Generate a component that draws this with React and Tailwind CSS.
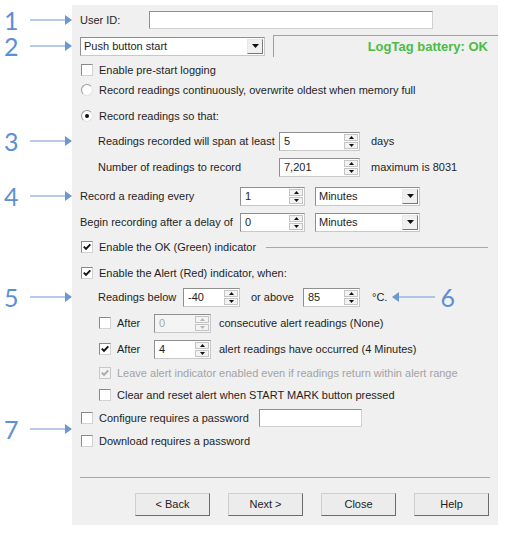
import React from "react"

const Callout = ({ n }) => (
    <div className="absolute right-full top-1/2 flex w-[72px] -translate-y-1/2 items-center">
        <span className="w-[31px] pl-[4px] text-[25px] font-normal leading-[20px] text-[#5b8fd6] font-['Lato',sans-serif]">{n}</span>
        <svg width="42" height="10" viewBox="0 0 42 10" className="shrink-0">
            <line x1="0" y1="5" x2="36" y2="5" stroke="#6d97d3" strokeWidth="1.2" />
            <polygon points="35,0 42,5 35,10" fill="#6d97d3" />
        </svg>
    </div>
)

const Check = ({ checked, disabled }) => (
    <span
        className={
            disabled
                ? "inline-flex h-[12px] w-[12px] shrink-0 items-center justify-center border border-[#c8c8c8] bg-[#f4f4f4]"
                : "inline-flex h-[12px] w-[12px] shrink-0 items-center justify-center border border-t-[#8a8a8a] border-l-[#8a8a8a] border-r-[#d2d2d2] border-b-[#d2d2d2] bg-white"
        }
    >
        {checked && (
            <svg width="8" height="8" viewBox="0 0 8 8">
                <path d="M0.8 3.6 L3 5.9 L7.3 1.3" stroke={disabled ? "#a9a9a9" : "#111"} strokeWidth="1.9" fill="none" />
            </svg>
        )}
    </span>
)

const Radio = ({ selected }) => (
    <span className="inline-flex h-[12px] w-[12px] shrink-0 items-center justify-center rounded-full border border-t-[#9a9a9a] border-l-[#9a9a9a] border-r-[#e2e2e2] border-b-[#e2e2e2] bg-white">
        {selected && <span className="h-[4px] w-[4px] rounded-full bg-[#111]" />}
    </span>
)

const Arrow = ({ up, disabled }) => (
    <svg width="5" height="3" viewBox="0 0 5 3">
        <polygon points={up ? "0,3 2.5,0 5,3" : "0,0 2.5,3 5,0"} fill={disabled ? "#b5b5b5" : "#111"} />
    </svg>
)

const Spin = ({ value, w, disabled }) => (
    <div className={`flex h-[19px] shrink-0 border border-t-[#8f8f8f] border-l-[#8f8f8f] border-r-[#c8c8c8] border-b-[#c8c8c8] ${disabled ? "bg-[#f4f4f4] text-[#a8a8a8]" : "bg-white"} ${w}`}>
        <span className="flex-1 pl-[4px] leading-[17px]">{value}</span>
        <div className="flex w-[15px] flex-col gap-px py-px pr-px">
            <span className="flex flex-1 items-center justify-center border border-[#c4c4c4] bg-[#f3f3f3]">
                <Arrow up disabled={disabled} />
            </span>
            <span className="flex flex-1 items-center justify-center border border-[#c4c4c4] bg-[#f3f3f3]">
                <Arrow disabled={disabled} />
            </span>
        </div>
    </div>
)

const Select = ({ value, w }) => (
    <div className={`flex h-[19px] shrink-0 items-center border border-t-[#8f8f8f] border-l-[#8f8f8f] border-r-[#c8c8c8] border-b-[#c8c8c8] bg-white ${w}`}>
        <span className="flex-1 pl-[3px]">{value}</span>
        <span className="mr-px flex h-[15px] w-[16px] items-center justify-center border border-t-[#e8e8e8] border-l-[#e8e8e8] border-r-[#777] border-b-[#777] bg-[#f0f0f0]">
            <svg width="7" height="4" viewBox="0 0 7 4">
                <polygon points="0,0 7,0 3.5,4" fill="#111" />
            </svg>
        </span>
    </div>
)

const Button = ({ children }) => (
    <button className="h-[23px] w-[75px] border border-t-[#cfcfcf] border-l-[#cfcfcf] border-r-[#6b6b6b] border-b-[#6b6b6b] bg-[#ececec] text-[#222]">
        {children}
    </button>
)

export default function App() {
    return (
        <div className="min-h-[536px] bg-white pt-[5px] text-[11px] text-[#1e1e1e] font-['Liberation_Sans',Arial,sans-serif]">
            <div className="ml-[72px] w-[426px] bg-[#f0f0f0] pt-[5px] pb-[9px]">
                <div className="relative flex h-[20px] items-center pl-[8px]">
                    <Callout n="1" />
                    <span className="w-[69px]">User ID:</span>
                    <div className="h-[18px] w-[284px] border border-t-[#8f8f8f] border-l-[#8f8f8f] border-r-[#d0d0d0] border-b-[#d0d0d0] bg-white" />
                </div>

                <div className="relative mt-[5px] flex h-[22px] items-center pl-[8px]">
                    <Callout n="2" />
                    <Select value="Push button start" w="w-[185px]" />
                    <div className="ml-[8px] flex h-[22px] flex-1 items-center justify-end border-t border-l border-t-[#a0a0a0] border-l-[#a0a0a0] pr-[10px] text-[13px] font-bold text-[#4dbb44]">
                        LogTag battery: OK
                    </div>
                </div>

                <div className="mt-[5px] flex h-[16px] items-center gap-[6px] pl-[9px]">
                    <Check />
                    <span>Enable pre-start logging</span>
                </div>

                <div className="mt-[4px] flex h-[16px] items-center gap-[6px] pl-[9px]">
                    <Radio />
                    <span>Record readings continuously, overwrite oldest when memory full</span>
                </div>

                <div className="mt-[10px] flex h-[16px] items-center gap-[6px] pl-[9px]">
                    <Radio selected />
                    <span>Record readings so that:</span>
                </div>

                <div className="relative mt-[7px] flex h-[20px] items-center pl-[26px]">
                    <Callout n="3" />
                    <span className="w-[181px]">Readings recorded will span at least</span>
                    <Spin value="5" w="w-[81px]" />
                    <span className="ml-[11px]">days</span>
                </div>

                <div className="mt-[6px] flex h-[20px] items-center pl-[26px]">
                    <span className="w-[181px]">Number of readings to record</span>
                    <Spin value="7,201" w="w-[81px]" />
                    <span className="ml-[11px]">maximum is 8031</span>
                </div>

                <div className="relative mt-[9px] flex h-[20px] items-center pl-[8px]">
                    <Callout n="4" />
                    <span className="w-[160px]">Record a reading every</span>
                    <Spin value="1" w="w-[65px]" />
                    <div className="ml-[10px]">
                        <Select value="Minutes" w="w-[105px]" />
                    </div>
                </div>

                <div className="mt-[6px] flex h-[20px] items-center pl-[8px]">
                    <span className="w-[160px]">Begin recording after a delay of</span>
                    <Spin value="0" w="w-[65px]" />
                    <div className="ml-[10px]">
                        <Select value="Minutes" w="w-[105px]" />
                    </div>
                </div>

                <div className="mt-[7px] flex h-[16px] items-center gap-[6px] pl-[9px] pr-[10px]">
                    <Check checked />
                    <span>Enable the OK (Green) indicator</span>
                    <span className="ml-[4px] h-px flex-1 bg-[#a9a9a9]" />
                </div>

                <div className="mt-[10px] flex h-[16px] items-center gap-[6px] pl-[9px]">
                    <Check checked />
                    <span>Enable the Alert (Red) indicator, when:</span>
                </div>

                <div className="relative mt-[6px] flex h-[20px] items-center pl-[26px]">
                    <Callout n="5" />
                    <span className="w-[85px]">Readings below</span>
                    <Spin value="-40" w="w-[57px]" />
                    <span className="ml-[11px] w-[52px]">or above</span>
                    <Spin value="85" w="w-[57px]" />
                    <span className="ml-[12px]">°C.</span>
                    <svg width="43" height="10" viewBox="0 0 43 10" className="ml-[5px] shrink-0">
                        <polygon points="0,5 7,0 7,10" fill="#6d97d3" />
                        <line x1="6" y1="5" x2="43" y2="5" stroke="#6d97d3" strokeWidth="1.2" />
                    </svg>
                    <span className="ml-[5px] text-[25px] font-normal leading-[20px] text-[#5b8fd6] font-['Lato',sans-serif]">6</span>
                </div>

                <div className="mt-[6px] flex h-[20px] items-center pl-[27px]">
                    <Check />
                    <span className="ml-[6px] w-[37px]">After</span>
                    <Spin value="0" w="w-[57px]" disabled />
                    <span className="ml-[8px]">consecutive alert readings (None)</span>
                </div>

                <div className="mt-[6px] flex h-[20px] items-center pl-[27px]">
                    <Check checked />
                    <span className="ml-[6px] w-[37px]">After</span>
                    <Spin value="4" w="w-[57px]" />
                    <span className="ml-[8px]">alert readings have occurred (4 Minutes)</span>
                </div>

                <div className="mt-[6px] flex h-[16px] items-center gap-[6px] pl-[27px] text-[#a3a3a3]">
                    <Check checked disabled />
                    <span>Leave alert indicator enabled even if readings return within alert range</span>
                </div>

                <div className="mt-[6px] flex h-[16px] items-center gap-[6px] pl-[27px]">
                    <Check />
                    <span>Clear and reset alert when START MARK button pressed</span>
                </div>

                <div className="relative mt-[5px]">
                    <Callout n="7" />
                    <div className="flex h-[20px] items-center pl-[9px]">
                        <Check />
                        <span className="ml-[6px] w-[160px]">Configure requires a password</span>
                        <div className="h-[18px] w-[103px] border border-t-[#8f8f8f] border-l-[#8f8f8f] border-r-[#d0d0d0] border-b-[#d0d0d0] bg-white" />
                    </div>
                    <div className="mt-[5px] flex h-[16px] items-center gap-[6px] pl-[9px]">
                        <Check />
                        <span>Download requires a password</span>
                    </div>
                </div>

                <div className="mx-[8px] mt-[28px] h-px bg-[#a9a9a9]" />

                <div className="mt-[15px] flex justify-end gap-[18px] pr-[9px]">
                    <Button>&lt; Back</Button>
                    <Button>Next &gt;</Button>
                    <Button>Close</Button>
                    <Button>Help</Button>
                </div>
            </div>
        </div>
    )
}
